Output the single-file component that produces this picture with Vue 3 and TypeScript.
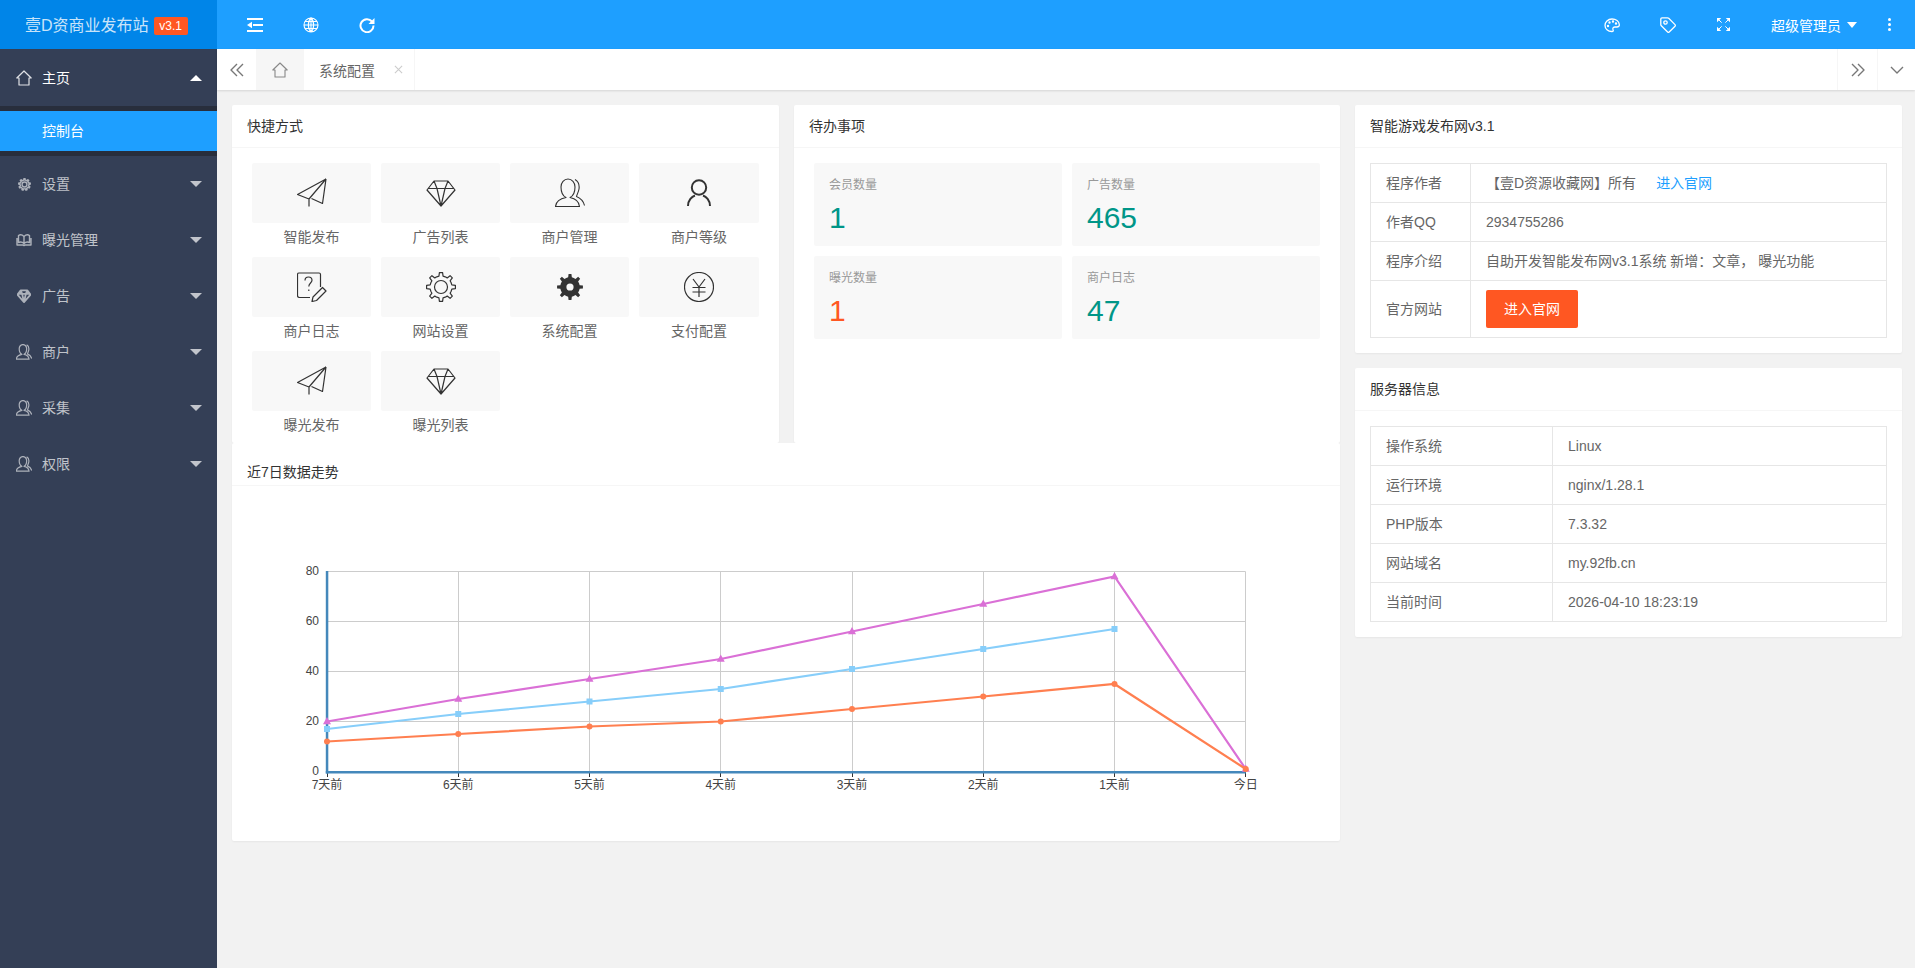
<script setup lang="ts">
import { h } from 'vue'

function gear(cx: number, cy: number, ro: number, ri: number, n: number): string {
  const pts: string[] = []
  const step = (Math.PI * 2) / n
  for (let i = 0; i < n; i++) {
    const a = i * step - Math.PI / 2
    const list: [number, number][] = [
      [a - step * 0.5, ri],
      [a - step * 0.24, ri],
      [a - step * 0.14, ro],
      [a + step * 0.14, ro],
      [a + step * 0.24, ri],
    ]
    for (const [t, r] of list) {
      pts.push(`${(cx + r * Math.cos(t)).toFixed(2)} ${(cy + r * Math.sin(t)).toFixed(2)}`)
    }
  }
  return 'M' + pts.join('L') + 'Z'
}
function circle(cx: number, cy: number, r: number): string {
  return `M${cx - r} ${cy}a${r} ${r} 0 1 0 ${r * 2} 0a${r} ${r} 0 1 0 ${-r * 2} 0Z`
}

interface IconDef { vb: number; d?: string; f?: string }
const icons: Record<string, IconDef> = {
  plane: { vb: 30, d: 'M29 1L.5 16.5L12 21V28.5M29 1L12 21M29 1L25.5 25.5L14.5 20.5' },
  diamond: { vb: 30, d: 'M8 3H22L29 12L15 28L1 12ZM2 10.5H28M11 10.5L15 28L19 10.5M8 3L11 10.5M22 3L19 10.5' },
  users: { vb: 30, d: 'M15 19.5C18 18 20 13.5 20 9C20 4.5 17 1 13 1C9 1 6 4.5 6 9C6 13.5 8 18 11 19.5C6 20.5 1 23.5 .5 28.5H24.5C24 23.5 20 20.5 15 19.5ZM20 1.5C23.5 3.5 24.5 7.5 24 11C23.5 14 22 16.5 21.5 18.5C25 20 28.500 23 29.500 27.500' },
  person: { vb: 30, d: circle(15, 9.5, 7.2) + 'M4 28C4 22 8 18.5 11 17.5M26 28C26 22 22 18.500 19 17.500' },
  doc: { vb: 30, d: 'M23.5 15V2.5C23.5 1.5 23 1 22 1H2C1 1 .5 1.500 .5 2.500V23.500C.5 25 1.500 25.500 2.500 25.500H13M8 8.500C8 6 9.500 5 11.500 5C13.500 5 15 6.500 15 8.200C15 11 11.800 11 11.800 14.500M11.800 17.500V19M25.500 15.500L29 19L19.500 28.500L15 29.500L16 25Z' },
  gearo: { vb: 30, d: gear(15, 15, 14.5, 11, 8) + circle(15, 15, 6.5) },
  gears: { vb: 30, f: gear(15, 15, 13, 9.8, 8) + circle(15, 15, 3.6) },
  yen: { vb: 30, d: circle(15, 15, 14.5) + 'M9 7L15 15L21 7M8.500 15.500H21.500M8.500 20H21.500M15 15V25' },
  home: { vb: 16, d: 'M8 1L.8 8H3V15H13V8H15.200Z' },
  set: { vb: 16, d: gear(8, 8, 7.2, 5.4, 9) + circle(8, 8, 3) },
  book: { vb: 16, d: 'M8 4.500C6.500 3 4 2.500 2.500 3.500V10.500C4 9.800 6.500 10 8 11.500C9.500 10 12 9.800 13.500 10.500V3.500C12 2.500 9.500 3 8 4.500ZM8 4.500V11.500M1 6V13H7L8 13.500L9 13H15V6' },
  shrink: { vb: 16, d: 'M0 2H16M6 8H16M0 14H16', f: 'M0 8L5 4.800V11.200Z' },
  globe: { vb: 16, d: circle(8, 8, 7) + 'M1 8H15M2 4.500H14M2 11.500H14M8 1V15M8 1C4.500 4 4.500 12 8 15M8 1C11.500 4 11.500 12 8 15' },
  refresh: { vb: 16, d: 'M13 4.500A6.500 6.500 0 1 0 14.500 8.500', f: 'M15.500 1V7H9.500Z' },
  palette: { vb: 16, d: 'M8 2C3.800 2 1 5 1 8.500C1 12 4 14.500 7.800 14.500C9.400 14.500 9.500 13.500 9 12.500C8.500 11 9.500 10 11 10H13C14.500 10 15.500 9 15.300 7.500C15 4.300 12 2 8 2Z', f: circle(4, 9, 1.2) + circle(5.500, 5.500, 1.2) + circle(9, 4.500, 1.2) + circle(12, 6.500, 1.2) },
  tag: { vb: 16, d: 'M2 .8H7.500C8 .8 8.400 1 8.700 1.300L15 7.600C15.500 8.100 15.500 8.700 15 9.200L9.200 15C8.700 15.500 8.100 15.500 7.600 15L1.300 8.700C1 8.400 .8 8 .8 7.500V2C.8 1.300 1.300 .8 2 .8Z' + circle(5.500, 5.500, 1.700) },
  full: { vb: 14, d: 'M5 5L1.500 1.500M9 5L12.500 1.500M5 9L1.500 12.500M9 9L12.500 12.500', f: 'M0 0H4.500L0 4.500ZM14 0V4.500L9.500 0ZM0 14V9.500L4.500 14ZM14 14H9.500L14 9.500Z' },
  left2: { vb: 14, d: 'M7 1L1 7L7 13M13 1L7 7L13 13' },
  right2: { vb: 14, d: 'M7 1L13 7L7 13M1 1L7 7L1 13' },
  down: { vb: 14, d: 'M1 4L7 10L13 4' },
  close: { vb: 10, d: 'M1 1L9 9M9 1L1 9' },
}

const Icon = (props: { name: string; size: number; sw?: number }) => {
  const ic = icons[props.name]
  const kids = []
  if (ic.d) {
    kids.push(h('path', {
      d: ic.d, fill: 'none', stroke: 'currentColor', 'stroke-width': props.sw ?? 1.2,
      'stroke-linejoin': 'round', 'vector-effect': 'non-scaling-stroke',
    }))
  }
  if (ic.f) kids.push(h('path', { d: ic.f, fill: 'currentColor', 'fill-rule': 'evenodd' }))
  return h('svg', { class: 'ico', width: props.size, height: props.size, viewBox: `0 0 ${ic.vb} ${ic.vb}` }, kids)
}
Icon.props = ['name', 'size', 'sw']

const menu = [
  { icon: 'set', label: '设置', sw: 1.4, size: 13 },
  { icon: 'book', label: '曝光管理', sw: 1.4, size: 16 },
  { icon: 'diamond', label: '广告', sw: 1.8, size: 14 },
  { icon: 'users', label: '商户', sw: 1.2, size: 16 },
  { icon: 'users', label: '采集', sw: 1.2, size: 16 },
  { icon: 'users', label: '权限', sw: 1.2, size: 16 },
]

const shortcuts = [
  { icon: 'plane', label: '智能发布', sw: 1.2 },
  { icon: 'diamond', label: '广告列表', sw: 1.2 },
  { icon: 'users', label: '商户管理', sw: 1.1 },
  { icon: 'person', label: '商户等级', sw: 2 },
  { icon: 'doc', label: '商户日志', sw: 1.2 },
  { icon: 'gearo', label: '网站设置', sw: 1.2 },
  { icon: 'gears', label: '系统配置', sw: 1 },
  { icon: 'yen', label: '支付配置', sw: 1.2 },
  { icon: 'plane', label: '曝光发布', sw: 1.2 },
  { icon: 'diamond', label: '曝光列表', sw: 1.2 },
]

const backlog = [
  { label: '会员数量', value: '1', hot: false },
  { label: '广告数量', value: '465', hot: false },
  { label: '曝光数量', value: '1', hot: true },
  { label: '商户日志', value: '47', hot: false },
]

const server = [
  ['操作系统', 'Linux'],
  ['运行环境', 'nginx/1.28.1'],
  ['PHP版本', '7.3.32'],
  ['网站域名', 'my.92fb.cn'],
  ['当前时间', '2026-04-10 18:23:19'],
]

// chart: the SVG's viewBox uses page pixels
const X0 = 327
const STEP = 131.25
const Y0 = 771.5
const UNIT = 2.5
const xLabels = ['7天前', '6天前', '5天前', '4天前', '3天前', '2天前', '1天前', '今日']
const xs = xLabels.map((_, i) => X0 + i * STEP)
const crisp = (v: number) => Math.floor(v) + 0.5
const yTicks = [0, 20, 40, 60, 80]
const yOf = (v: number) => Y0 - v * UNIT
const pts = (data: number[]) => data.map((v, i) => ({ x: xs[i], y: yOf(v) }))
const line = (data: number[]) => pts(data).map((p) => `${p.x},${p.y}`).join(' ')
const pink = [20, 29, 37, 45, 56, 67, 78, 1]
const blue = [17, 23, 28, 33, 41, 49, 57]
const orange = [12, 15, 18, 20, 25, 30, 35, 1]
const tri = (x: number, y: number) => `${x},${y - 4.5} ${x + 4},${y + 2.800} ${x - 4},${y + 2.800}`
</script>

<template>
  <div class="app">
    <header class="top">
      <div class="logo"><span>壹D资商业发布站</span><em>v3.1</em></div>
      <div class="topbar">
        <div class="top-left">
          <Icon name="shrink" :size="16" :sw="2" />
          <Icon name="globe" :size="16" :sw="1.1" />
          <Icon name="refresh" :size="16" :sw="2" />
        </div>
        <div class="top-right">
          <Icon name="palette" :size="16" :sw="1.3" />
          <Icon name="tag" :size="16" :sw="1.3" />
          <Icon name="full" :size="13" :sw="1" />
          <div class="user"><span>超级管理员</span><i class="caret-white"></i></div>
          <div class="dots"><i></i><i></i><i></i></div>
        </div>
      </div>
    </header>

    <div class="body">
      <aside class="side">
        <div class="item first on">
          <span class="side-icon"><Icon name="home" :size="16" :sw="1.2" /></span>
          <span class="side-text">主页</span>
          <i class="caret up"></i>
        </div>
        <div class="sub"><div class="sub-on">控制台</div></div>
        <div v-for="m in menu" :key="m.label" class="item">
          <span class="side-icon"><Icon :name="m.icon" :size="m.size" :sw="m.sw" /></span>
          <span class="side-text">{{ m.label }}</span>
          <i class="caret"></i>
        </div>
      </aside>

      <main class="main">
        <nav class="tabs">
          <div class="tab-btn left"><Icon name="left2" :size="14" :sw="1.4" /></div>
          <div class="tab-home"><Icon name="home" :size="16" :sw="1.1" /></div>
          <div class="tab-page"><span>系统配置</span><span class="tab-close"><Icon name="close" :size="9" :sw="1.1" /></span></div>
          <div class="tab-space"></div>
          <div class="tab-btn right"><Icon name="right2" :size="14" :sw="1.4" /></div>
          <div class="tab-btn last"><Icon name="down" :size="14" :sw="1.4" /></div>
        </nav>

        <div class="content">
          <div class="col-main">
            <div class="row-two">
              <section class="card">
                <h3 class="card-head">快捷方式</h3>
                <div class="shortcut-grid">
                  <div v-for="s in shortcuts" :key="s.label" class="shortcut">
                    <div class="tile"><Icon :name="s.icon" :size="30" :sw="s.sw" /></div>
                    <div class="tile-label">{{ s.label }}</div>
                  </div>
                </div>
              </section>
              <section class="card">
                <h3 class="card-head">待办事项</h3>
                <div class="backlog-grid">
                  <div v-for="b in backlog" :key="b.label" class="backlog">
                    <div class="backlog-label">{{ b.label }}</div>
                    <div class="backlog-value" :class="{ hot: b.hot }">{{ b.value }}</div>
                  </div>
                </div>
              </section>
            </div>
            <section class="card chart-card">
              <h3 class="card-head chart-head">近7日数据走势</h3>
              <svg class="chart" width="1108" height="355" viewBox="232 486 1108 355">
                <g stroke="#ccc" stroke-width="1" fill="none">
                  <line v-for="t in yTicks.slice(1)" :key="t" :x1="X0" :x2="crisp(xs[7])" :y1="yOf(t)" :y2="yOf(t)" />
                  <line v-for="(x, i) in xs.slice(1)" :key="i" :x1="crisp(x)" :x2="crisp(x)" y1="571.5" y2="772" />
                </g>
                <g stroke="#333" stroke-width="1">
                  <line v-for="(x, i) in xs" :key="i" :x1="crisp(x)" :x2="crisp(x)" y1="772" y2="777" />
                </g>
                <rect x="325.8" y="571" width="2.5" height="202.500" fill="#4488bb" />
                <rect x="325.8" y="771" width="920" height="2.500" fill="#4488bb" />
                <g class="axis-text">
                  <text v-for="t in yTicks" :key="t" x="319" :y="yOf(t) + 3" text-anchor="end">{{ t }}</text>
                  <text v-for="(l, i) in xLabels" :key="l" :x="xs[i]" y="789" text-anchor="middle">{{ l }}</text>
                </g>
                <polyline :points="line(pink)" fill="none" stroke="#da70d6" stroke-width="2.200" />
                <polygon v-for="(p, i) in pts(pink)" :key="i" :points="tri(p.x, p.y)" fill="#da70d6" />
                <polyline :points="line(blue)" fill="none" stroke="#87cefa" stroke-width="2.200" />
                <rect v-for="(p, i) in pts(blue)" :key="i" :x="p.x - 3" :y="p.y - 3" width="6" height="6" fill="#87cefa" />
                <polyline :points="line(orange)" fill="none" stroke="#ff7f50" stroke-width="2.200" />
                <circle v-for="(p, i) in pts(orange)" :key="i" :cx="p.x" :cy="p.y" r="3" fill="#ff7f50" />
              </svg>
            </section>
          </div>

          <div class="col-side">
            <section class="card">
              <h3 class="card-head">智能游戏发布网v3.1</h3>
              <div class="table-wrap">
                <table class="info first-table">
                  <tbody>
                    <tr><td class="k">程序作者</td><td>【壹D资源收藏网】所有<a class="link">进入官网</a></td></tr>
                    <tr><td class="k">作者QQ</td><td>2934755286</td></tr>
                    <tr><td class="k">程序介绍</td><td>自助开发智能发布网v3.1系统 新增：文章， 曝光功能</td></tr>
                    <tr><td class="k">官方网站</td><td><button class="btn" type="button">进入官网</button></td></tr>
                  </tbody>
                </table>
              </div>
            </section>
            <section class="card">
              <h3 class="card-head">服务器信息</h3>
              <div class="table-wrap">
                <table class="info second-table">
                  <tbody>
                    <tr v-for="r in server" :key="r[0]"><td class="k">{{ r[0] }}</td><td>{{ r[1] }}</td></tr>
                  </tbody>
                </table>
              </div>
            </section>
          </div>
        </div>
      </main>
    </div>
  </div>
</template>

<style>
html, body { margin: 0; background: #f2f2f2; }
.ico { display: block; }
</style>

<style scoped>
.app {
  height: 100vh;
  display: flex;
  flex-direction: column;
  overflow: hidden;
  font-family: "Liberation Sans", "Noto Sans CJK SC", sans-serif;
  font-size: 14px;
  color: #666;
}
.top { height: 49px; display: flex; flex: none; }
.logo {
  width: 217px;
  flex: none;
  background: #0085e8;
  display: flex;
  align-items: center;
  padding-left: 25px;
  box-sizing: border-box;
  color: rgba(255, 255, 255, 0.8);
  font-size: 16px;
}
.logo span { margin-top: -2px; }
.logo em {
  font-style: normal;
  margin: 3px 0 0 5px;
  width: 34px;
  height: 18px;
  line-height: 18px;
  text-align: center;
  font-size: 12px;
  border-radius: 2px;
  background: #ff5722;
  color: #fff;
}
.topbar {
  flex: 1;
  background: #1e9fff;
  color: #fff;
  display: flex;
  justify-content: space-between;
  align-items: center;
}
.top-left { display: flex; gap: 40px; padding-left: 30px; }
.top-right { display: flex; align-items: center; }
.top-right > svg:nth-child(1) { margin-right: 40px; }
.top-right > svg:nth-child(2) { margin-right: 41px; }
.top-right > svg:nth-child(3) { margin-right: 41px; }
.user { display: flex; align-items: center; color: #fff; font-size: 14px; margin-right: 31px; }
.caret-white {
  margin-left: 6px;
  width: 0; height: 0;
  border: 5px solid transparent;
  border-top: 6px solid #fff;
  border-bottom: 0;
}
.dots { display: flex; flex-direction: column; gap: 2px; width: 3px; margin-right: 24px; }
.dots i { width: 3px; height: 3px; background: #fff; display: block; border-radius: 50%; }

.body { flex: 1; display: flex; min-height: 0; }
.side { width: 217px; flex: none; background: #343f56; padding-top: 1px; box-sizing: border-box; }
.item {
  height: 56px;
  display: flex;
  align-items: center;
  color: rgba(255, 255, 255, 0.7);
  padding-right: 15px;
}
.item.on { color: #fff; }
.side-icon { width: 16px; margin-left: 16px; margin-right: 10px; display: flex; justify-content: center; opacity: 0.85; }
.side-text { flex: 1; margin-top: -2px; }
.caret {
  width: 0; height: 0;
  border-left: 6px solid transparent;
  border-right: 6px solid transparent;
  border-top: 6px solid rgba(255, 255, 255, 0.7);
}
.caret.up { border-top: 0; border-bottom: 6px solid #fff; }
.sub { background: #282e3c; padding: 5px 0; }
.sub-on { height: 40px; line-height: 40px; background: #1e9fff; color: #fff; padding-left: 42px; }

.main { flex: 1; min-width: 0; display: flex; flex-direction: column; }
.tabs {
  height: 41px;
  flex: none;
  background: #fff;
  display: flex;
  box-shadow: 0 1px 2px rgba(0, 0, 0, 0.12);
  position: relative;
  color: #777;
}
.tab-btn { display: flex; align-items: center; justify-content: center; box-sizing: border-box; }
.tab-btn.left { width: 39px; }
.tab-btn.right { width: 40px; border-left: 1px solid #f6f6f6; }
.tab-btn.last { width: 38px; border-left: 1px solid #f6f6f6; }
.tab-home { width: 48px; background: #f6f6f6; display: flex; align-items: center; justify-content: center; color: #888; }
.tab-page {
  width: 111px;
  box-sizing: border-box;
  display: flex;
  align-items: center;
  padding-left: 15px;
  color: #666;
  border-right: 1px solid #f6f6f6;
}
.tab-close { margin-left: 19px; color: #ccc; }
.tab-space { flex: 1; }

.content {
  flex: 1;
  padding: 15px 0 0 15px;
  display: grid;
  grid-template-columns: 1108px 547px;
  column-gap: 15px;
  align-items: start;
}
.col-main { display: flex; flex-direction: column; }
.col-side { display: flex; flex-direction: column; gap: 15px; }
.row-two { display: grid; grid-template-columns: 547fr 546fr; column-gap: 15px; height: 338px; }
.card {
  background: #fff;
  border-radius: 2px;
  box-shadow: 0 1px 2px rgba(0, 0, 0, 0.05);
}
.card-head {
  margin: 0;
  height: 43px;
  box-sizing: border-box;
  line-height: 42px;
  padding: 0 15px;
  font-size: 14px;
  font-weight: 400;
  color: #333;
  border-bottom: 1px solid #f6f6f6;
}
.shortcut-grid {
  padding: 15px 20px 0;
  display: grid;
  grid-template-columns: 119fr 119fr 119fr 120fr;
  column-gap: 10px;
  row-gap: 6px;
}
.tile {
  height: 60px;
  background: #f8f8f8;
  border-radius: 2px;
  display: flex;
  align-items: center;
  justify-content: center;
  color: #333;
}
.tile-label { height: 28px; line-height: 28px; text-align: center; color: #666; }
.backlog-grid {
  padding: 15px 20px 0;
  display: grid;
  grid-template-columns: 1fr 1fr;
  gap: 10px;
}
.backlog { height: 83px; box-sizing: border-box; background: #f8f8f8; border-radius: 2px; padding: 13px 15px 0; }
.backlog-label { font-size: 12px; line-height: 18px; color: #999; }
.backlog-value { margin-top: 6px; font-size: 30px; line-height: 36px; color: #009688; }
.backlog-value.hot { color: #ff5722; }

.chart-card { height: 398px; }
.chart-head { padding-top: 16px; line-height: 26px; }
.chart { display: block; }
.axis-text text { font-size: 12px; fill: #444; font-family: "Liberation Sans", "Noto Sans CJK SC", sans-serif; }

.table-wrap { padding: 15px; }
.info { width: 100%; border-collapse: collapse; color: #666; }
.info td { border: 1px solid #e6e6e6; padding: 9px 15px; line-height: 20px; }
.first-table .k { width: 69px; }
.second-table .k { width: 151px; }
.link { color: #1e9fff; margin-left: 20px; }
.btn {
  display: block;
  height: 38px;
  width: 92px;
  padding: 0;
  border: 0;
  border-radius: 2px;
  background: #ff5722;
  color: #fff;
  font: inherit;
}
</style>
